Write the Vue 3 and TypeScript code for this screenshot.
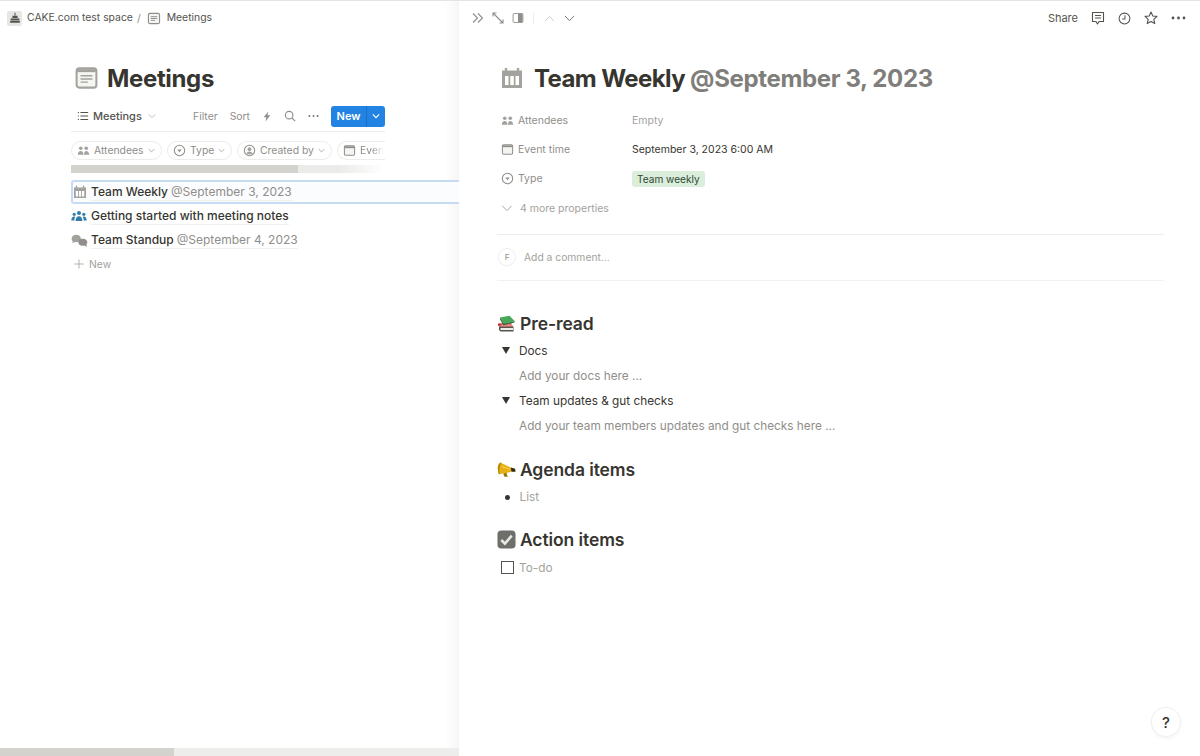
<script setup lang="ts">
const chips = [
  { label: 'Attendees', icon: 'people', w: 91 },
  { label: 'Type', icon: 'select', w: 65 },
  { label: 'Created by', icon: 'user', w: 95 },
]
const rows = [
  { icon: 'cal', title: 'Team Weekly', date: '@September 3, 2023', active: true },
  { icon: 'team', title: 'Getting started with meeting notes', date: '', active: false },
  { icon: 'chat', title: 'Team Standup', date: '@September 4, 2023', active: false },
]
</script>

<template>
  <div class="app">
    <section class="left">
      <header class="crumbs">
        <span class="space-icon">
          <svg viewBox="0 0 16 16" width="14" height="14"><path d="M7.400 2h1.200v3H7.400zM5 5.500h6V8H5zM3 8.500h10v2H3zM2.500 11h11v2.500h-11z" fill="#55534e" /></svg>
        </span>
        <span class="crumb-text">CAKE.com test space</span>
        <span class="crumb-sep">/</span>
        <svg class="crumb-page" viewBox="0 0 14 14" width="14" height="13"><rect x="1" y="1.500" width="12" height="11" rx="1.600" fill="#f4f4f2" stroke="#8f8e8a" stroke-width="1.200" /><path d="M3.500 5h7M3.500 7h7M3.500 9h4.500" stroke="#8f8e8a" stroke-width="1" /></svg>
        <span class="crumb-text crumb-last">Meetings</span>
      </header>

      <div class="db">
        <h1 class="db-title">
          <svg viewBox="0 0 24 24" width="23" height="22"><rect x="1.200" y="1.500" width="21.600" height="21" rx="3" fill="#f5f5f3" stroke="#a3a29d" stroke-width="2.200" /><rect x="2" y="2.400" width="20" height="3.200" fill="#a3a29d" /><path d="M5.500 9.500h13M5.500 13h13M5.500 16.500h8" stroke="#a3a29d" stroke-width="1.600" /></svg>
          <span>Meetings</span>
        </h1>

        <div class="toolbar">
          <div class="view">
            <svg viewBox="0 0 14 14" width="12" height="12"><path d="M4 3h9M4 7h9M4 11h9" stroke="#55534e" stroke-width="1.200" /><path d="M1 3h1.200M1 7h1.200M1 11h1.200" stroke="#55534e" stroke-width="1.400" /></svg>
            <span>Meetings</span>
            <svg viewBox="0 0 10 10" width="8" height="8"><path d="M1 3l4 4 4-4" fill="none" stroke="#b5b4b0" stroke-width="1.100" /></svg>
          </div>
          <div class="actions">
            <span>Filter</span>
            <span>Sort</span>
            <svg viewBox="0 0 12 14" width="10" height="13"><path d="M7.500 1L2 8h3.200L4 13l6-7.500H6.600z" fill="#8f8e8a" /></svg>
            <svg viewBox="0 0 14 14" width="12" height="12"><circle cx="6" cy="6" r="4.400" fill="none" stroke="#8f8e8a" stroke-width="1.300" /><path d="M9.200 9.200L13 13" stroke="#8f8e8a" stroke-width="1.400" /></svg>
            <svg viewBox="0 0 12 4" width="11" height="4"><circle cx="1.500" cy="2" r="1.100" fill="#77766f" /><circle cx="6" cy="2" r="1.100" fill="#77766f" /><circle cx="10.500" cy="2" r="1.100" fill="#77766f" /></svg>
          </div>
          <div class="new-btn">
            <span class="new-label">New</span>
            <span class="new-arrow"><svg viewBox="0 0 10 10" width="8" height="8"><path d="M1 3l4 4 4-4" fill="none" stroke="#fff" stroke-width="1.400" /></svg></span>
          </div>
        </div>

        <div class="chips">
          <div v-for="c in chips" :key="c.label" class="chip" :style="{ width: c.w + 'px' }">
            <svg v-if="c.icon === 'people'" viewBox="0 0 14 12" width="13" height="11"><circle cx="4" cy="3.500" r="2" fill="#a3a29d" /><circle cx="10" cy="3.500" r="2" fill="#a3a29d" /><path d="M0.800 10.500c0-2.400 1.400-4 3.200-4s3 1.600 3 4zM7.600 10.500c0-2.400 .8-4 2.400-4s3.200 1.600 3.200 4z" fill="#a3a29d" /></svg>
            <svg v-else-if="c.icon === 'select'" viewBox="0 0 14 14" width="13" height="13"><circle cx="7" cy="7" r="5.600" fill="none" stroke="#8f8e8a" stroke-width="1.100" /><path d="M4.600 5.800h4.800L7 8.800z" fill="#8f8e8a" /></svg>
            <svg v-else viewBox="0 0 14 14" width="13" height="13"><circle cx="7" cy="7" r="5.600" fill="none" stroke="#8f8e8a" stroke-width="1.100" /><circle cx="7" cy="5.600" r="2" fill="#a3a29d" /><path d="M3.500 11c.6-2 2-2.800 3.500-2.800s2.900 .8 3.500 2.800z" fill="#a3a29d" /></svg>
            <span>{{ c.label }}</span>
            <svg viewBox="0 0 10 10" width="7" height="7"><path d="M1 3l4 4 4-4" fill="none" stroke="#a3a29d" stroke-width="1.200" /></svg>
          </div>
          <div class="chip chip-cut">
            <svg viewBox="0 0 14 14" width="13" height="13"><rect x="1.500" y="2" width="11" height="10" rx="1.200" fill="#f4f4f2" stroke="#8f8e8a" stroke-width="1.100" /><rect x="2" y="2.500" width="10" height="2" fill="#8f8e8a" /></svg>
            <span class="clip-text">Even</span>
          </div>
        </div>

        <div class="hscroll"><div class="hscroll-thumb"></div></div>
      </div>

      <div class="rows">
        <div v-for="r in rows" :key="r.title" class="row" :class="{ active: r.active }">
          <span class="row-icon">
            <svg v-if="r.icon === 'cal'" viewBox="0 0 14 14" width="14" height="14"><path d="M1 2.500h12v10.500H1z" fill="#a3a29d" /><path d="M3.500 .8v2.400M10.500 .8v2.400" stroke="#a3a29d" stroke-width="1.400" /><path d="M2.800 6h2.200v5.500H2.800zM5.900 6h2.200v5.500H5.900zM9 6h2.200v5.500H9z" fill="#fff" /></svg>
            <svg v-else-if="r.icon === 'team'" viewBox="0 0 18 14" width="16" height="13"><g fill="#337ea9"><circle cx="9" cy="3" r="2.300" /><circle cx="3.600" cy="4.600" r="1.800" /><circle cx="14.400" cy="4.600" r="1.800" /><path d="M5.200 12c0-3 1.500-5.200 3.800-5.200s3.800 2.200 3.800 5.200zM0.300 11.500c0-2.200 1.200-4.400 3-4.400 .6 0 1 .2 1.300 .5-.5 1-.8 2.500-.8 3.900zM17.700 11.500c0-2.200-1.200-4.400-3-4.400-.6 0-1 .2-1.300 .5 .5 1 .8 2.500 .8 3.900z" /></g></svg>
            <svg v-else viewBox="0 0 18 14" width="17" height="13"><path d="M.5 5C.5 2.500 2.800 .8 5.500 .8S10.500 2.500 10.500 5 8.200 8.800 5.500 8.800c-.6 0-1.200 0-1.700-.2L1.300 10l.4-2.400C1 7 .5 6 .5 5z" fill="#a3a29d" /><path d="M7.800 8.800c0-2.200 1.700-3.800 4.600-3.800s5 1.600 5 3.800c0 1-.4 1.800-1 2.400l.6 2.500-2.600-1.200c-.6 .2-1.300 .2-2 .2-2.900 0-4.600-1.700-4.600-3.900z" fill="#8f8e8a" /></svg>
          </span>
          <span class="row-text"><b>{{ r.title }}</b><i v-if="r.date">{{ r.date }}</i></span>
        </div>
        <div class="row-new">
          <svg viewBox="0 0 12 12" width="10" height="10"><path d="M6 .5v11M.5 6h11" stroke="#a3a29d" stroke-width="1" /></svg>
          <span>New</span>
        </div>
      </div>

      <div class="spacer"></div>
      <div class="bottom-scroll"><div class="bottom-thumb"></div></div>
    </section>

    <section class="right">
      <header class="topbar">
        <div class="tools">
          <svg viewBox="0 0 12 12" width="12" height="12"><path d="M1 1.500L5.500 6 1 10.500M6 1.500L10.500 6 6 10.500" fill="none" stroke="#8f8e8a" stroke-width="1.100" /></svg>
          <svg viewBox="0 0 12 12" width="12" height="12"><path d="M1 4.500V1h3.500M1 1l10 10M11 7.500V11H7.500" fill="none" stroke="#8f8e8a" stroke-width="1.100" /></svg>
          <svg viewBox="0 0 12 11" width="12" height="10"><rect x=".6" y=".6" width="10.800" height="9.800" rx="1" fill="none" stroke="#8f8e8a" stroke-width="1" /><rect x="6" y="1" width="5" height="9" fill="#8f8e8a" /></svg>
          <span class="tool-div"></span>
          <svg viewBox="0 0 12 8" width="11" height="7"><path d="M.8 7L6 1.500 11.200 7" fill="none" stroke="#cfcec9" stroke-width="1.100" /></svg>
          <svg viewBox="0 0 12 8" width="11" height="7"><path d="M.8 1L6 6.500 11.200 1" fill="none" stroke="#77766f" stroke-width="1.100" /></svg>
        </div>
        <div class="top-right">
          <span class="share">Share</span>
          <svg viewBox="0 0 14 14" width="14" height="14"><path d="M1.500 1.500h11v9H8L6.500 13l-1.500-2.500H1.500z" fill="none" stroke="#55534e" stroke-width="1.100" stroke-linejoin="round" /><path d="M4 4.500h6M4 7h6" stroke="#55534e" stroke-width="1" /></svg>
          <svg viewBox="0 0 14 14" width="13" height="13"><circle cx="7" cy="7" r="5.800" fill="none" stroke="#55534e" stroke-width="1.100" /><path d="M7.500 3.500V7.500H4.500" fill="none" stroke="#55534e" stroke-width="1.100" /></svg>
          <svg viewBox="0 0 14 14" width="14" height="14"><path d="M7 1l1.800 4 4.200 .4-3.200 2.900 1 4.300L7 10.400 3.200 12.600l1-4.300L1 5.400 5.200 5z" fill="none" stroke="#55534e" stroke-width="1.100" stroke-linejoin="round" /></svg>
          <svg viewBox="0 0 15 4" width="15" height="4"><circle cx="2" cy="2" r="1.400" fill="#55534e" /><circle cx="7.500" cy="2" r="1.400" fill="#55534e" /><circle cx="13" cy="2" r="1.400" fill="#55534e" /></svg>
        </div>
      </header>

      <main class="page">
        <h1 class="page-title">
          <svg viewBox="0 0 22 22" width="22" height="22"><path d="M1 3.500h20V21H1z" fill="#a3a29d" /><path d="M5 1v4M17 1v4" stroke="#a3a29d" stroke-width="2.400" /><path d="M4 9h3.500v9H4zM9.300 9h3.500v9H9.300zM14.500 9H18v9h-3.500z" fill="#fff" /></svg>
          <span>Team Weekly <em>@September 3, 2023</em></span>
        </h1>

        <div class="props">
          <div class="prop">
            <div class="prop-key">
              <svg viewBox="0 0 14 12" width="13" height="11"><circle cx="4" cy="3.500" r="2" fill="#a3a29d" /><circle cx="10" cy="3.500" r="2" fill="#a3a29d" /><path d="M0.800 10.500c0-2.400 1.400-4 3.200-4s3 1.600 3 4zM7.600 10.500c0-2.400 .8-4 2.400-4s3.200 1.600 3.200 4z" fill="#a3a29d" /></svg>
              <span>Attendees</span>
            </div>
            <span class="prop-empty">Empty</span>
          </div>
          <div class="prop">
            <div class="prop-key">
              <svg viewBox="0 0 14 14" width="13" height="13"><rect x="1.500" y="2" width="11" height="10" rx="1.200" fill="#f4f4f2" stroke="#8f8e8a" stroke-width="1.100" /><rect x="2" y="2.500" width="10" height="2" fill="#8f8e8a" /></svg>
              <span>Event time</span>
            </div>
            <span class="prop-val">September 3, 2023 6:00 AM</span>
          </div>
          <div class="prop">
            <div class="prop-key">
              <svg viewBox="0 0 14 14" width="13" height="13"><circle cx="7" cy="7" r="5.600" fill="none" stroke="#8f8e8a" stroke-width="1.100" /><path d="M4.600 5.800h4.800L7 8.800z" fill="#8f8e8a" /></svg>
              <span>Type</span>
            </div>
            <span class="tag">Team weekly</span>
          </div>
          <div class="more">
            <svg viewBox="0 0 12 8" width="12" height="7"><path d="M.8 1L6 6.500 11.200 1" fill="none" stroke="#a3a29d" stroke-width="1.100" /></svg>
            <span>4 more properties</span>
          </div>
        </div>

        <div class="comment">
          <span class="avatar">F</span>
          <span>Add a comment...</span>
        </div>

        <div class="body">
          <h2 class="h2 h2-first">
            <svg viewBox="0 0 18 18" width="18" height="18"><path d="M2 11.500h14.500V16.500H3.500L2 15z" fill="#55554f" /><path d="M3.500 13h12.500v2H3.500z" fill="#eeece5" /><path d="M1 8.500l13-.5 2 3.500H3L1 10.500z" fill="#cf2a2e" /><path d="M3.500 9.800l11.500-.4 .5 1H3.500z" fill="#f0e6dc" /><path d="M3 2.500L12.500 .8 17.500 6 7 8.800z" fill="#47a957" /><path d="M3 2.500L7 8.800l10.500-2.800v1.400L6.500 10.200 3 4.500z" fill="#2a7139" /></svg>
            <span>Pre-read</span>
          </h2>
          <div class="toggle"><span class="tri"></span><span>Docs</span></div>
          <p class="ph">Add your docs here ...</p>
          <div class="toggle"><span class="tri"></span><span>Team updates &amp; gut checks</span></div>
          <p class="ph">Add your team members updates and gut checks here ...</p>

          <h2 class="h2 h2-agenda">
            <svg viewBox="0 0 20 18" width="19" height="17"><path d="M3.500 1.500L14.500 7l.8 4.500L2 14 .8 8z" fill="#e7b012" /><path d="M3.500 1.500C1.800 2.500 .6 5 .8 8s.8 6 1.200 6l.9-.2C2.200 11 2.200 5 4.600 2z" fill="#b18607" /><path d="M14.500 7l4.700 1.200.4 3.300-4.300 0z" fill="#33290f" /><path d="M6.500 13.200l1.300 3.600h3.600l-1.500-4.300z" fill="#9c7509" /><path d="M5 6l8.500 2.700" stroke="#f6d563" stroke-width="1" /></svg>
            <span>Agenda items</span>
          </h2>
          <div class="bullet"><span class="dot"></span><span>List</span></div>

          <h2 class="h2 h2-action">
            <svg viewBox="0 0 20 20" width="19" height="19"><rect x=".5" y=".5" width="19" height="19" rx="4" fill="#6e6e6b" /><path d="M4.500 10.500l3.800 3.800L15.500 6" fill="none" stroke="#e8e8e6" stroke-width="2.800" /></svg>
            <span>Action items</span>
          </h2>
          <div class="todo"><span class="box"></span><span>To-do</span></div>
        </div>
      </main>

      <div class="help">?</div>
    </section>
  </div>
</template>

<style scoped>
.app {
  width: 1200px;
  height: 756px;
  display: flex;
  overflow: hidden;
  background: #fff;
  font-family: Inter, "Liberation Sans", sans-serif;
  color: #37352f;
  border-top: 1px solid #e4e4e4;
  box-sizing: border-box;
}
svg { flex: none; display: block; }

.left {
  width: 459px;
  flex: none;
  display: flex;
  flex-direction: column;
  background: linear-gradient(to right, #fff 445px, #f6f6f5 459px);
}
.crumbs {
  height: 34px;
  padding-left: 7px;
  display: flex;
  align-items: center;
  font-size: 10.400px;
  color: #55534e;
  flex: none;
}
.space-icon {
  width: 15px;
  height: 15px;
  background: #e6e6e4;
  border-radius: 2px;
  display: flex;
  align-items: center;
  justify-content: center;
}
.crumb-text { line-height: 14px; margin-left: 5px; }
.crumb-sep { margin-left: 4px; color: #8f8e8a; }
.crumb-page { margin-left: 6px; }
.crumb-last { margin-left: 6px; }
.db { margin-left: 71px; width: 314px; }
.db-title {
  margin: 27px 0 0;
  height: 32px;
  padding-left: 4px;
  display: flex;
  align-items: center;
  gap: 9px;
  font-size: 24px;
  font-weight: 700;
  letter-spacing: -0.350px;
}
.toolbar {
  margin-top: 7px;
  height: 31px;
  border-bottom: 1px solid #ececea;
  display: flex;
  align-items: center;
  padding: 1px 0;
  box-sizing: border-box;
}
.view {
  display: flex;
  align-items: center;
  gap: 4px;
  padding-left: 6px;
  font-size: 11px;
  font-weight: 500;
  color: #55534e;
}
.view svg:last-child { margin-left: 2px; }
.actions {
  margin-left: auto;
  display: flex;
  align-items: center;
  gap: 12px;
  font-size: 10.400px;
  color: #8f8e8a;
  margin-right: 12px;
}
.new-btn {
  width: 54px;
  height: 21px;
  background: #2383e2;
  border-radius: 3px;
  color: #fff;
  display: flex;
  font-size: 11px;
  font-weight: 600;
}
.new-label {
  width: 35px;
  display: flex;
  align-items: center;
  justify-content: center;
  border-right: 1px solid #1a6fc4;
}
.new-arrow {
  flex: 1;
  display: flex;
  align-items: center;
  justify-content: center;
}
.chips {
  margin-top: 9px;
  height: 20px;
  display: flex;
  gap: 5px;
  overflow: hidden;
}
.chip {
  flex: none;
  height: 19px;
  box-sizing: border-box;
  border: 1px solid #ececea;
  border-radius: 10px;
  padding-left: 5px;
  display: flex;
  align-items: center;
  gap: 4px;
  font-size: 10.400px;
  color: #8f8e8a;
}
.chip-cut { width: 48px; border-right: 0; border-radius: 10px 0 0 10px; }
.clip-text { -webkit-mask-image: linear-gradient(to right, #000 50%, transparent); mask-image: linear-gradient(to right, #000 50%, transparent); }
.hscroll {
  margin-top: 4px;
  height: 8px;
  background: linear-gradient(to right, #ebebe9 85%, #fff 100%);
}
.hscroll-thumb { width: 227px; height: 8px; background: #d3d2cd; }

.rows { margin-left: 71px; margin-top: 7px; }
.row {
  height: 24px;
  display: flex;
  align-items: center;
  font-size: 12px;
  box-sizing: border-box;
}
.row.active {
  background: #fbfcfe;
  border: 2px solid #c6dcf5;
  border-right: 0;
  border-radius: 3px 0 0 3px;
}
.row-icon {
  width: 20px;
  flex: none;
  display: flex;
  align-items: center;
  justify-content: flex-start;
}
.row.active .row-icon { box-sizing: border-box; width: 18px; }
.row-text { border-bottom: 1px solid #f0f0ee; line-height: 16px; white-space: nowrap; }
.row-text b { font-weight: 500; color: #37352f; }
.row-text i { font-style: normal; color: #8f8e8a; margin-left: 3px; }
.row-new {
  height: 24px;
  padding-left: 3px;
  display: flex;
  align-items: center;
  gap: 5px;
  font-size: 10.400px;
  color: #a3a29d;
}
.spacer { flex: 1; }
.bottom-scroll { height: 8px; background: #ededeb; }
.bottom-thumb { width: 174px; height: 8px; background: #d3d2cd; }

.right {
  flex: 1;
  min-width: 0;
  position: relative;
  display: flex;
  flex-direction: column;
}
.topbar {
  height: 34px;
  flex: none;
  display: flex;
  align-items: center;
  justify-content: space-between;
  padding: 0 14px 0 13px;
  box-sizing: border-box;
}
.tools { display: flex; align-items: center; gap: 8px; }
.tool-div { width: 1px; height: 11px; background: #ececea; margin: 0 2px 0 1px; }
.tools svg:nth-last-child(2) { margin-right: 1px; }
.top-right { display: flex; align-items: center; gap: 13px; }
.share { font-size: 11px; color: #55534e; }
.page { padding: 0 36px 0 38px; }
.page-title {
  margin: 27px 0 0;
  height: 32px;
  display: flex;
  align-items: center;
  gap: 11px;
  padding-left: 4px;
  font-size: 24px;
  font-weight: 700;
  letter-spacing: -0.600px;
  white-space: nowrap;
}
.page-title em { font-style: normal; color: #7f7e7a; letter-spacing: -0.350px; }
.props { margin-top: 11.500px; padding-left: 4px; border-bottom: 1px solid #ededeb; padding-bottom: 10px; }
.prop {
  height: 29px;
  display: flex;
  align-items: center;
  font-size: 10.500px;
}
.prop-key {
  width: 131px;
  flex: none;
  display: flex;
  align-items: center;
  gap: 4px;
  color: #8f8e8a;
}
.prop-empty { color: #a3a29d; }
.prop-val { color: #37352f; }
.tag {
  background: #dbeddb;
  color: #2e4a34;
  padding: 0 5px;
  height: 16px;
  line-height: 16px;
  border-radius: 3px;
  font-size: 10.100px;
  margin-top: 1px;
}
.more {
  height: 31px;
  display: flex;
  align-items: center;
  gap: 7px;
  font-size: 10.500px;
  color: #a3a29d;
}
.comment {
  height: 46px;
  border-bottom: 1px solid #f1f1ef;
  display: flex;
  align-items: center;
  gap: 9px;
  padding-left: 2px;
  box-sizing: border-box;
  font-size: 10.300px;
  color: #a3a29d;
}
.avatar {
  width: 16px;
  height: 16px;
  border-radius: 50%;
  background: #fff;
  box-shadow: 0 0 0 1px #efefee, 0 1px 2px rgba(0, 0, 0, 0.06);
  display: flex;
  align-items: center;
  justify-content: center;
  font-size: 8px;
  color: #8f8e8a;
}
.h2 {
  margin: 0;
  display: flex;
  align-items: center;
  gap: 4px;
  height: 26px;
  font-size: 17.500px;
  font-weight: 600;
  letter-spacing: -0.100px;
  color: #37352f;
}
.h2-first { margin-top: 30px; gap: 5px; }
.h2-agenda { margin-top: 17.500px; }
.h2-action { margin-top: 17px; }
.toggle {
  height: 25px;
  display: flex;
  align-items: center;
  padding-left: 5px;
  gap: 8px;
  font-size: 11.800px;
  color: #37352f;
}
.toggle:first-of-type { margin-top: 2px; }
.tri {
  width: 0;
  height: 0;
  border-left: 4px solid transparent;
  border-right: 4px solid transparent;
  border-top: 7px solid #37352f;
  margin-right: 1px;
  margin-top: -2px;
}
.ph {
  margin: 0;
  height: 25px;
  padding-left: 22px;
  line-height: 25px;
  font-size: 11.800px;
  color: #8f8e8a;
}
.bullet {
  height: 25px;
  display: flex;
  align-items: center;
  padding-left: 8px;
  gap: 9.500px;
  font-size: 11.800px;
  color: #a3a29d;
  margin-top: 2.500px;
}
.dot { width: 5px; height: 5px; border-radius: 50%; background: #37352f; }
.todo {
  height: 25px;
  display: flex;
  align-items: center;
  padding-left: 4px;
  gap: 5px;
  font-size: 11.800px;
  color: #a3a29d;
  margin-top: 2.500px;
}
.box { width: 13px; height: 13px; border: 1.500px solid #55534e; box-sizing: border-box; }
.help {
  position: absolute;
  right: 20px;
  bottom: 20px;
  width: 28px;
  height: 28px;
  border-radius: 50%;
  background: #fff;
  box-shadow: 0 0 0 1px #efefee, 0 2px 4px rgba(0, 0, 0, 0.06);
  display: flex;
  align-items: center;
  justify-content: center;
  font-size: 15px;
  font-weight: 500;
  color: #37352f;
}
</style>
